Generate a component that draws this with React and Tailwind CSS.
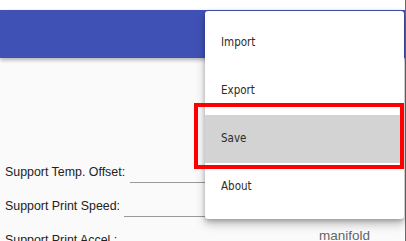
import React from "react";

const items = ["Import", "Export", "Save", "About"];

export default function App() {
  return (
    <div className="relative w-[406px] h-[241px] overflow-hidden flex bg-white" style={{ fontFamily: '"Liberation Sans", Arial, sans-serif' }}>
      <div className="flex-1 flex flex-col overflow-hidden">
        <div className="h-[10px] shrink-0 bg-white" />
        <div className="h-[48px] shrink-0 bg-[#3f51b5] shadow-[0_2px_4px_rgba(0,0,0,0.3)] relative z-10" />
        <div className="flex-1 min-h-0 bg-[#fafafa] pt-[104px] pl-[5px] text-[12.4px] text-[#222]">
          <div className="flex items-end h-[20px]">
            <span>Support Temp. Offset:</span>
            <div className="ml-[5px] w-[180px] border-b border-[#999] mb-[-1px]" />
          </div>
          <div className="flex items-end h-[20px] mt-[14px]">
            <span>Support Print Speed:</span>
            <div className="ml-[4px] w-[180px] border-b border-[#999] mb-[-1px]" />
          </div>
          <div className="flex items-start h-[20px] mt-[13px]">
            <span className="mt-[2px]">Support Print Accel.:</span>
            <span className="ml-auto mr-[35px] mt-[-3px] text-[13.5px] text-[#666]">manifold</span>
          </div>
        </div>
      </div>
      <div className="w-px shrink-0 bg-[#6a6a6a]" />

      <div className="absolute left-[205px] top-[11px] w-[199px] py-2 bg-white rounded-[3px] shadow-[0_5px_10px_rgba(0,0,0,0.25),0_2px_4px_rgba(0,0,0,0.2)] z-20" style={{ fontFamily: 'Tahoma, "DejaVu Sans Condensed", "Liberation Sans", sans-serif' }}>
        {items.map((label) => (
          <div key={label} className={`h-12 px-4 flex items-center text-[11.5px] text-[#2e2a26] ${label === "Save" ? "bg-[#d3d3d3]" : ""}`}>
            {label}
          </div>
        ))}
      </div>

      <div className="absolute left-[194px] top-[103px] w-[210px] h-[66px] border-4 border-[#ff0000] z-30" />
    </div>
  );
}
